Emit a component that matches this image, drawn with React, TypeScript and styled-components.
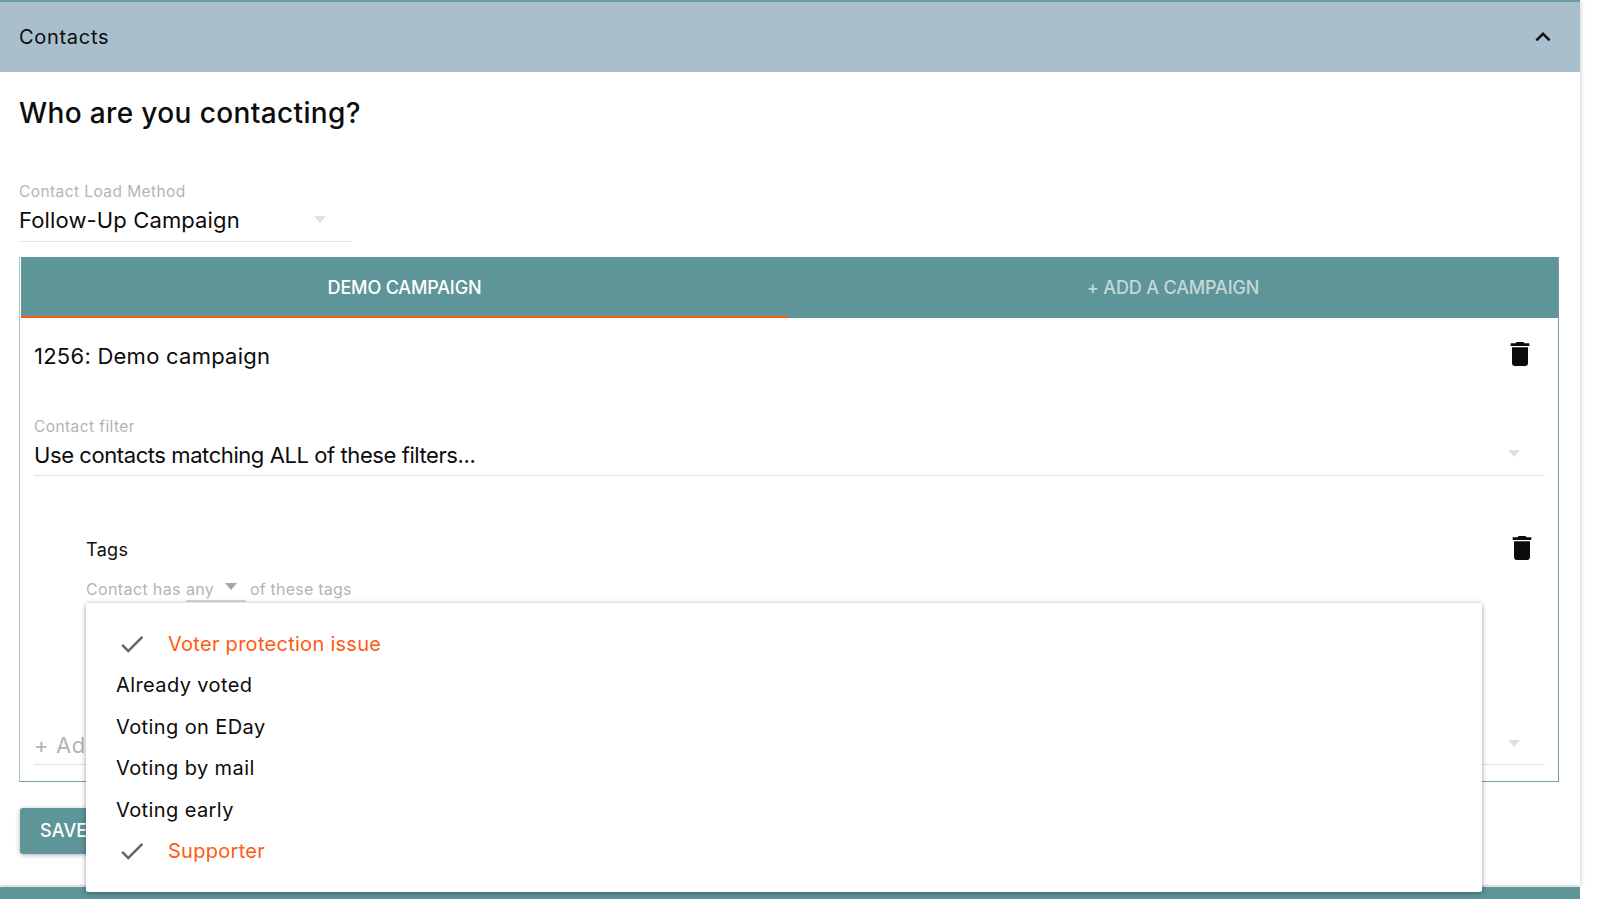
import React from "react";
import styled, { createGlobalStyle } from "styled-components";

const Global = createGlobalStyle`
  html, body { margin: 0; padding: 0; background: #fff; }
  body { font-family: Inter, "Noto Sans", "Liberation Sans", sans-serif; color: #0c0c0c; }
`;

const Page = styled.div`
  position: relative;
  width: 1600px;
  height: 899px;
  overflow: hidden;
  display: flex;
  flex-direction: column;
`;
const Panel = styled.section`
  width: 1580px;
  height: 885px;
  flex: none;
  border-top: 2px solid #6f9ea2;
  box-sizing: border-box;
  background: #fff;
  box-shadow: 0 1px 5px rgba(0, 0, 0, 0.25);
  display: flex;
  flex-direction: column;
`;
const Footer = styled.div`
  width: 1580px;
  height: 12px;
  margin-top: 2px;
  background: #5e9599;
`;
const Header = styled.header`
  height: 70px;
  flex: none;
  background: #a9bfcd;
  display: flex;
  align-items: center;
  justify-content: space-between;
  padding: 0 22px 0 19px;
  font-size: 20px;
  letter-spacing: 0.7px;
`;
const Body = styled.div`
  padding: 0 20px 0 19px;
  display: flex;
  flex-direction: column;
`;
const Title = styled.h2`
  margin: 23px 0 0 0;
  font-size: 28px;
  line-height: 36px;
  font-weight: 450;
  letter-spacing: 0.37px;
  color: #0c0c0c;
`;
const SelectField = styled.div`
  width: 100%;
  position: relative;
  box-sizing: border-box;
  border-bottom: 1px solid #e3e3e3;
`;
const FieldLabel = styled.div`
  font-size: 15.5px;
  line-height: 20px;
  color: #b4b4b4;
  letter-spacing: 0.42px;
`;
const FieldValue = styled.div<{ $spacing: number; $pad: number }>`
  font-size: 22px;
  line-height: 30px;
  margin-top: 3px;
  padding-bottom: ${(p) => p.$pad}px;
  letter-spacing: ${(p) => p.$spacing}px;
`;
const Caret = styled.span<{ $color?: string }>`
  width: 0;
  height: 0;
  border-left: 6px solid transparent;
  border-right: 6px solid transparent;
  border-top: 7px solid ${(p) => p.$color || "#e0e0e0"};
`;
const FieldCaret = styled.div<{ $right: number; $bottom: number }>`
  position: absolute;
  display: flex;
  right: ${(p) => p.$right}px;
  bottom: ${(p) => p.$bottom}px;
`;
const LoadField = styled.div`
  margin: 51px 0 0 0;
  width: 333px;
`;
const CampaignBox = styled.div`
  margin-top: 15px;
  width: 1540px;
  height: 525px;
  box-sizing: border-box;
  border: 1px solid #74a0a6;
  border-top: 0;
  border-left-color: #a9bfcd;
  display: flex;
  flex-direction: column;
`;
const Tabs = styled.div`
  height: 61px;
  flex: none;
  display: grid;
  grid-template-columns: 767px 1fr;
  margin-left: 1px;
  background: #5e9599;
`;
const Tab = styled.div<{ $active?: boolean }>`
  display: flex;
  align-items: center;
  justify-content: center;
  box-sizing: border-box;
  padding-top: 2px;
  font-size: 18px;
  font-weight: 500;
  letter-spacing: -0.15px;
  color: ${(p) => (p.$active ? "#fff" : "rgba(255,255,255,0.65)")};
  border-bottom: 2px solid ${(p) => (p.$active ? "#ff5a14" : "transparent")};
`;
const CampaignBody = styled.div`
  padding: 0 13px 0 14px;
  display: flex;
  flex-direction: column;
`;
const CampaignRow = styled.div`
  display: flex;
  align-items: center;
  justify-content: space-between;
  height: 74px;
  font-size: 22px;
  letter-spacing: 0.25px;
`;
const CampaignName = styled.span`
  padding-top: 1px;
`;
const TrashIcon = styled.svg<{ $shift: number }>`
  width: 32px;
  height: 32px;
  fill: #0c0c0c;
  margin: -3px ${(p) => p.$shift}px 0 0;
  flex: none;
`;
const FilterField = styled.div`
  margin-top: 25px;
`;
const TagBlock = styled.div`
  margin: 57px 0 0 52px;
  height: 196px;
`;
const TagHead = styled.div`
  display: flex;
  align-items: center;
  justify-content: space-between;
  font-size: 18px;
  line-height: 32px;
  letter-spacing: 0.35px;
  height: 32px;
`;
const TagName = styled.span`
  padding-top: 2px;
`;
const TagRule = styled.div`
  margin-top: 14px;
  display: flex;
  align-items: flex-start;
  font-size: 16px;
  line-height: 20px;
  letter-spacing: 0.37px;
  color: #b4b4b4;
`;
const TagRuleEnd = styled.span`
  letter-spacing: 0.22px;
`;
const AnySelect = styled.span`
  position: relative;
  display: inline-flex;
  justify-content: space-between;
  box-sizing: border-box;
  width: 60px;
  height: 23px;
  margin: 0 4px 0 5px;
  border-bottom: 2px solid #d6d6d6;
`;
const AnyCaret = styled.span`
  display: flex;
  margin: 4px 9px 0 0;
`;
const AddField = styled.div`
  border-bottom: 1px solid #e3e3e3;
  position: relative;
  font-size: 22px;
  line-height: 30px;
  height: 36px;
  padding-top: 1px;
  box-sizing: border-box;
  color: #b4b4b4;
  letter-spacing: 0.6px;
`;
const SaveButton = styled.button`
  margin: 26px 0 0 1px;
  width: 150px;
  height: 46px;
  padding: 0 0 2px 20px;
  text-align: left;
  border: 0;
  border-radius: 3px;
  background: #5e9599;
  color: #fff;
  font: 500 18px Inter, "Noto Sans", sans-serif;
  letter-spacing: 0.2px;
  box-shadow: 0 1px 5px rgba(0, 0, 0, 0.3);
`;
const Menu = styled.div`
  position: absolute;
  left: 86px;
  top: 603px;
  width: 1396px;
  height: 289px;
  box-sizing: border-box;
  padding: 20.4px 0 0;
  background: #fff;
  border-radius: 2px;
  box-shadow: 0 1px 6px rgba(0, 0, 0, 0.22), 0 1px 4px rgba(0, 0, 0, 0.18);
`;
const MenuItem = styled.div<{ $selected?: boolean }>`
  height: 41.4px;
  display: flex;
  align-items: center;
  padding-left: ${(p) => (p.$selected ? "31px" : "30px")};
  font-size: 20px;
  letter-spacing: ${(p) => (p.$selected ? "0.28px" : "0.4px")};
  color: ${(p) => (p.$selected ? "#ff5a14" : "#0c0c0c")};
`;
const CheckIcon = styled.svg`
  width: 30px;
  height: 30px;
  fill: #666;
  margin: 0 21px 0 0;
  flex: none;
`;

const TRASH = "M6 19c0 1.1.9 2 2 2h8c1.1 0 2-.9 2-2V7H6v12zM19 4h-3.5l-1-1h-5l-1 1H5v2h14V4z";

const Trash = ({ shift }: { shift: number }) => (
  <TrashIcon $shift={shift} viewBox="0 0 24 24" aria-hidden="true">
    <path d={TRASH} />
  </TrashIcon>
);

const items: { label: string; selected?: boolean }[] = [
  { label: "Voter protection issue", selected: true },
  { label: "Already voted" },
  { label: "Voting on EDay" },
  { label: "Voting by mail" },
  { label: "Voting early" },
  { label: "Supporter", selected: true },
];

export default function App() {
  return (
    <Page>
      <Global />
      <Panel>
        <Header>
          <span>Contacts</span>
          <svg width="30" height="30" viewBox="0 0 24 24" fill="#0c0c0c" aria-hidden="true">
            <path d="M12 8l-6 6 1.41 1.41L12 10.83l4.59 4.58L18 14z" />
          </svg>
        </Header>
        <Body>
          <Title>Who are you contacting?</Title>
          <LoadField>
            <FieldLabel>Contact Load Method</FieldLabel>
            <SelectField>
              <FieldValue $spacing={0.13} $pad={6}>Follow-Up Campaign</FieldValue>
              <FieldCaret $right={26} $bottom={18}>
                <Caret />
              </FieldCaret>
            </SelectField>
          </LoadField>
          <CampaignBox>
            <Tabs>
              <Tab $active>DEMO CAMPAIGN</Tab>
              <Tab>+ ADD A CAMPAIGN</Tab>
            </Tabs>
            <CampaignBody>
              <CampaignRow>
                <CampaignName>1256: Demo campaign</CampaignName>
                <Trash shift={9} />
              </CampaignRow>
              <FilterField>
                <FieldLabel>Contact filter</FieldLabel>
                <SelectField>
                  <FieldValue $spacing={-0.42} $pad={5}>Use contacts matching ALL of these filters...</FieldValue>
                  <FieldCaret $right={25} $bottom={18}>
                    <Caret />
                  </FieldCaret>
                </SelectField>
              </FilterField>
              <TagBlock>
                <TagHead>
                  <TagName>Tags</TagName>
                  <Trash shift={7} />
                </TagHead>
                <TagRule>
                  <span>Contact has</span>
                  <AnySelect>
                    <span>any</span>
                    <AnyCaret>
                      <Caret $color="#a6a6a6" />
                    </AnyCaret>
                  </AnySelect>
                  <TagRuleEnd>of these tags</TagRuleEnd>
                </TagRule>
              </TagBlock>
              <AddField>
                + Add
                <FieldCaret $right={25} $bottom={17}>
                  <Caret />
                </FieldCaret>
              </AddField>
            </CampaignBody>
          </CampaignBox>
          <SaveButton>SAVE</SaveButton>
        </Body>
      </Panel>
      <Footer />
      <Menu>
        {items.map((item) => (
          <MenuItem key={item.label} $selected={item.selected}>
            {item.selected && (
              <CheckIcon viewBox="0 0 24 24" aria-hidden="true">
                <path d="M9 16.17L4.83 12l-1.42 1.41L9 19 21 7l-1.41-1.41z" />
              </CheckIcon>
            )}
            {item.label}
          </MenuItem>
        ))}
      </Menu>
    </Page>
  );
}
